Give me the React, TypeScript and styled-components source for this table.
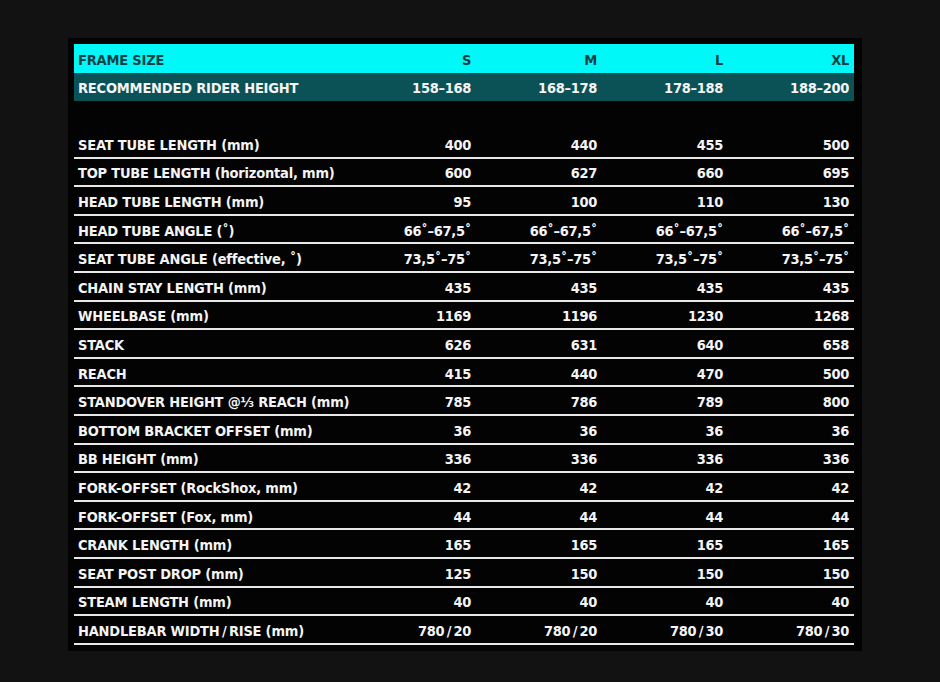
import React from "react";
import styled, { createGlobalStyle, css } from "styled-components";

const Global = createGlobalStyle`
  html, body { margin: 0; padding: 0; background: #121212; }
  body { width: 940px; height: 682px; overflow: hidden; }
`;

const Page = styled.div`
  display: flex;
  align-items: flex-start;
  padding: 38px 0 0 68px;
  box-sizing: border-box;
  width: 940px;
  height: 682px;
`;

const Panel = styled.div`
  background: #030303;
  padding: 6px 8px 6px 6px;
  width: 794px;
  box-sizing: border-box;
`;

const Table = styled.div`
  display: flex;
  flex-direction: column;
  width: 780px;
  font-family: "DejaVu Sans Condensed", "DejaVu Sans", sans-serif;
  font-stretch: condensed;
  font-weight: 700;
  font-size: 14.5px;
`;

type Variant = "size" | "height" | "blank" | "data";

const Row = styled.div<{ $variant: Variant }>`
  display: grid;
  grid-template-columns: 274px repeat(4, 126px);
  height: 28.6px;
  box-sizing: border-box;
  align-items: center;
  color: #f4f4f4;
  padding-top: 2px;
  ${({ $variant }) =>
    $variant === "size"
      ? css`
          background: #00f8f8;
          color: #0a3f46;
          height: 29px;
        `
      : $variant === "height"
      ? css`
          background: #0b5257;
          color: #f4f4f4;
          height: 28px;
        `
      : $variant === "blank"
      ? css`
          height: 29px;
        `
      : css`
          border-bottom: 2px solid #e8e8e8;
          padding-top: 3px;
        `}
`;

const Label = styled.div`
  padding-left: 4px;
  white-space: nowrap;
  letter-spacing: -0.2px;
`;

const Value = styled.div`
  text-align: right;
  padding-right: 3px;
  white-space: nowrap;
  letter-spacing: -0.3px;
`;

const sizes = ["S", "M", "L", "XL"];

const rows: [string, string[]][] = [
  ["SEAT TUBE LENGTH (mm)", ["400", "440", "455", "500"]],
  ["TOP TUBE LENGTH (horizontal, mm)", ["600", "627", "660", "695"]],
  ["HEAD TUBE LENGTH (mm)", ["95", "100", "110", "130"]],
  ["HEAD TUBE ANGLE (˚)", ["66˚–67,5˚", "66˚–67,5˚", "66˚–67,5˚", "66˚–67,5˚"]],
  ["SEAT TUBE ANGLE (effective, ˚)", ["73,5˚–75˚", "73,5˚–75˚", "73,5˚–75˚", "73,5˚–75˚"]],
  ["CHAIN STAY LENGTH (mm)", ["435", "435", "435", "435"]],
  ["WHEELBASE (mm)", ["1169", "1196", "1230", "1268"]],
  ["STACK", ["626", "631", "640", "658"]],
  ["REACH", ["415", "440", "470", "500"]],
  ["STANDOVER HEIGHT @⅓ REACH (mm)", ["785", "786", "789", "800"]],
  ["BOTTOM BRACKET OFFSET (mm)", ["36", "36", "36", "36"]],
  ["BB HEIGHT (mm)", ["336", "336", "336", "336"]],
  ["FORK-OFFSET (RockShox, mm)", ["42", "42", "42", "42"]],
  ["FORK-OFFSET (Fox, mm)", ["44", "44", "44", "44"]],
  ["CRANK LENGTH (mm)", ["165", "165", "165", "165"]],
  ["SEAT POST DROP (mm)", ["125", "150", "150", "150"]],
  ["STEAM LENGTH (mm)", ["40", "40", "40", "40"]],
  ["HANDLEBAR WIDTH\u2009/\u2009RISE (mm)", ["780\u2009/\u200920", "780\u2009/\u200920", "780\u2009/\u200930", "780\u2009/\u200930"]],
];

export default function App() {
  return (
    <>
      <Global />
      <Page>
        <Panel>
          <Table>
            <Row $variant="size">
              <Label>FRAME SIZE</Label>
              {sizes.map((s) => (
                <Value key={s}>{s}</Value>
              ))}
            </Row>
            <Row $variant="height">
              <Label>RECOMMENDED RIDER HEIGHT</Label>
              {["158–168", "168–178", "178–188", "188–200"].map((v) => (
                <Value key={v}>{v}</Value>
              ))}
            </Row>
            <Row $variant="blank" />
            {rows.map(([label, vals]) => (
              <Row $variant="data" key={label}>
                <Label>{label}</Label>
                {vals.map((v, i) => (
                  <Value key={i}>{v}</Value>
                ))}
              </Row>
            ))}
          </Table>
        </Panel>
      </Page>
    </>
  );
}
